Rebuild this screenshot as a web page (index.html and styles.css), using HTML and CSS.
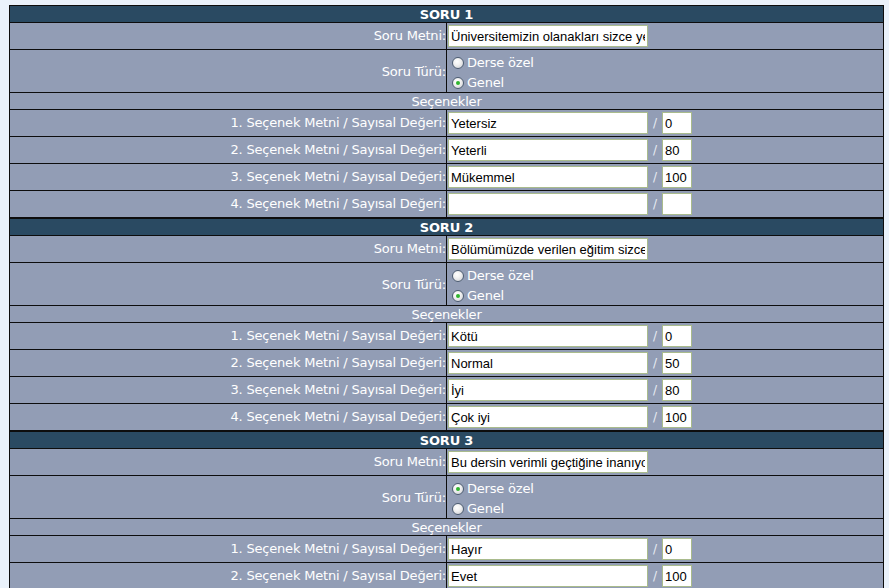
FILE: index.html
```html
<!DOCTYPE html>
<html lang="tr">
<head>
<meta charset="utf-8">
<title>Sorular</title>
<link rel="stylesheet" href="styles.css">
</head>
<body>
<div class="page">

<table class="q">
  <tr><th colspan="2" class="head">SORU 1</th></tr>
  <tr class="r26"><td class="lbl">Soru Metni:</td><td class="val"><input class="txt" type="text" value="Üniversitemizin olanakları sizce yeterli mi?"></td></tr>
  <tr class="r42"><td class="lbl">Soru Türü:</td><td class="val">
    <label class="rad"><input type="radio" name="t1"> Derse özel</label>
    <label class="rad"><input type="radio" name="t1" checked> Genel</label>
  </td></tr>
  <tr><td colspan="2" class="sub">Seçenekler</td></tr>
  <tr class="r26"><td class="lbl">1. Seçenek Metni / Sayısal Değeri:</td><td class="val"><div class="opt"><input class="txt" type="text" value="Yetersiz"><span class="sl">/</span><input class="num" type="text" value="0"></div></td></tr>
  <tr class="r26"><td class="lbl">2. Seçenek Metni / Sayısal Değeri:</td><td class="val"><div class="opt"><input class="txt" type="text" value="Yeterli"><span class="sl">/</span><input class="num" type="text" value="80"></div></td></tr>
  <tr class="r26"><td class="lbl">3. Seçenek Metni / Sayısal Değeri:</td><td class="val"><div class="opt"><input class="txt" type="text" value="Mükemmel"><span class="sl">/</span><input class="num" type="text" value="100"></div></td></tr>
  <tr class="r26"><td class="lbl">4. Seçenek Metni / Sayısal Değeri:</td><td class="val"><div class="opt"><input class="txt" type="text" value=""><span class="sl">/</span><input class="num" type="text" value=""></div></td></tr>
</table>

<table class="q">
  <tr><th colspan="2" class="head">SORU 2</th></tr>
  <tr class="r26"><td class="lbl">Soru Metni:</td><td class="val"><input class="txt" type="text" value="Bölümümüzde verilen eğitim sizce yeterli mi?"></td></tr>
  <tr class="r42"><td class="lbl">Soru Türü:</td><td class="val">
    <label class="rad"><input type="radio" name="t2"> Derse özel</label>
    <label class="rad"><input type="radio" name="t2" checked> Genel</label>
  </td></tr>
  <tr><td colspan="2" class="sub">Seçenekler</td></tr>
  <tr class="r26"><td class="lbl">1. Seçenek Metni / Sayısal Değeri:</td><td class="val"><div class="opt"><input class="txt" type="text" value="Kötü"><span class="sl">/</span><input class="num" type="text" value="0"></div></td></tr>
  <tr class="r26"><td class="lbl">2. Seçenek Metni / Sayısal Değeri:</td><td class="val"><div class="opt"><input class="txt" type="text" value="Normal"><span class="sl">/</span><input class="num" type="text" value="50"></div></td></tr>
  <tr class="r26"><td class="lbl">3. Seçenek Metni / Sayısal Değeri:</td><td class="val"><div class="opt"><input class="txt" type="text" value="İyi"><span class="sl">/</span><input class="num" type="text" value="80"></div></td></tr>
  <tr class="r26"><td class="lbl">4. Seçenek Metni / Sayısal Değeri:</td><td class="val"><div class="opt"><input class="txt" type="text" value="Çok iyi"><span class="sl">/</span><input class="num" type="text" value="100"></div></td></tr>
</table>

<table class="q">
  <tr><th colspan="2" class="head">SORU 3</th></tr>
  <tr class="r26"><td class="lbl">Soru Metni:</td><td class="val"><input class="txt" type="text" value="Bu dersin verimli geçtiğine inanıyor musunuz?"></td></tr>
  <tr class="r42"><td class="lbl">Soru Türü:</td><td class="val">
    <label class="rad"><input type="radio" name="t3" checked> Derse özel</label>
    <label class="rad"><input type="radio" name="t3"> Genel</label>
  </td></tr>
  <tr><td colspan="2" class="sub">Seçenekler</td></tr>
  <tr class="r26"><td class="lbl">1. Seçenek Metni / Sayısal Değeri:</td><td class="val"><div class="opt"><input class="txt" type="text" value="Hayır"><span class="sl">/</span><input class="num" type="text" value="0"></div></td></tr>
  <tr class="r26"><td class="lbl">2. Seçenek Metni / Sayısal Değeri:</td><td class="val"><div class="opt"><input class="txt" type="text" value="Evet"><span class="sl">/</span><input class="num" type="text" value="100"></div></td></tr>
  <tr class="r26"><td class="lbl">3. Seçenek Metni / Sayısal Değeri:</td><td class="val"><div class="opt"><input class="txt" type="text" value=""><span class="sl">/</span><input class="num" type="text" value=""></div></td></tr>
  <tr class="r26"><td class="lbl">4. Seçenek Metni / Sayısal Değeri:</td><td class="val"><div class="opt"><input class="txt" type="text" value=""><span class="sl">/</span><input class="num" type="text" value=""></div></td></tr>
</table>

</div>
</body>
</html>
```

FILE: styles.css
```css
html, body {
  margin: 0;
  padding: 0;
  background: #eaf2fb;
}
.page {
  padding: 5px 0 0 9px;
  font-family: "DejaVu Sans", Verdana, sans-serif;
  font-size: 13px;
  letter-spacing: -0.2px;
  color: #ffffff;
}
.q {
  border-collapse: collapse;
  width: 875px;
  table-layout: fixed;
}
.q th, .q td {
  border: 1px solid #0d0d0d;
  padding: 0;
  background: #929db5;
  line-height: 16px;
}
.q th.head {
  background: #2a4a62;
  font-weight: bold;
  text-align: center;
  height: 15px;
  padding-top: 1px;
  line-height: 15px;
}
.q td.sub {
  text-align: center;
  height: 15px;
  padding-top: 1px;
  line-height: 15px;
}
.q td.lbl {
  width: 436px;
  text-align: right;
  padding-right: 0;
  vertical-align: middle;
}
.q td.val {
  text-align: left;
  padding-left: 1px;
  vertical-align: middle;
}
.r26 td { height: 26px; }
.r42 td { height: 42px; }
.r42 td.lbl {
  height: 41px;
  padding-top: 1px;
}
.r42 td.val {
  height: 39px;
  padding-top: 3px;
  vertical-align: top;
}
.txt, .num {
  box-sizing: border-box;
  height: 22px;
  margin: 2px 0;
  border: 1px solid #a9bb8c;
  background: #fff;
  font-family: "Liberation Sans", Arial, sans-serif;
  font-size: 13px;
  letter-spacing: 0;
  color: #000;
  padding: 0 2px;
  outline: none;
  display: block;
}
.txt { width: 200px; }
.num { width: 30px; }
.opt {
  display: flex;
  align-items: center;
}
.sl {
  width: 14px;
  text-align: center;
  color: #e8ecf3;
  font-size: 12px;
}
.rad {
  display: flex;
  align-items: center;
  height: 20px;
  padding-left: 4px;
  gap: 3px;
}
.rad + .rad {
  height: 19px;
}
.rad input {
  -webkit-appearance: none;
  appearance: none;
  width: 12px;
  height: 12px;
  margin: 0;
  border-radius: 50%;
  border: 1px solid #4a5a70;
  background: radial-gradient(circle at 40% 35%, #ffffff 0%, #f1f1f1 40%, #c9cbd0 100%);
  position: relative;
  box-sizing: border-box;
}
.rad input:checked::after {
  content: "";
  position: absolute;
  left: 3px;
  top: 3px;
  width: 4px;
  height: 4px;
  border-radius: 50%;
  background: #2fb42f;
}
```
